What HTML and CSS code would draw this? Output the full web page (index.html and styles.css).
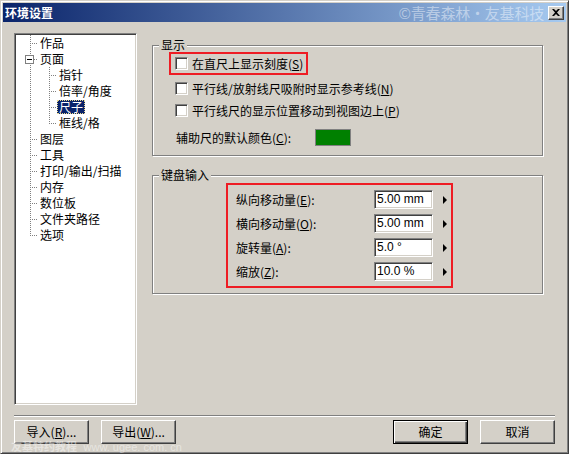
FILE: index.html
```html
<!DOCTYPE html>
<html lang="zh-CN">
<head>
    <meta charset="UTF-8">
    <title>环境设置</title>
    <link rel="stylesheet" href="styles.css">
</head>
<body>
<div class="window">
    <div class="titlebar">
        <span class="title">环境设置</span>
        <span class="mark">©青春森林・友基科技</span>
        <span class="close">
            <svg width="8" height="7" viewBox="0 0 8 7"><path d="M0 0h2l2 2 2-2h2L5 3.5 8 7H6L4 5 2 7H0l3-3.5z" fill="#000"/></svg>
        </span>
    </div>

    <div class="main">
        <div class="tree">
            <div class="row"><span class="conn"></span><span class="node">作品</span></div>
            <div class="row"><span class="conn"><span class="toggle"></span></span><span class="node">页面</span></div>
            <div class="row"><span class="conn pass"></span><span class="conn child"></span><span class="node">指针</span></div>
            <div class="row"><span class="conn pass"></span><span class="conn child"></span><span class="node">倍率/角度</span></div>
            <div class="row"><span class="conn pass"></span><span class="conn child"></span><span class="node selected">尺子</span></div>
            <div class="row"><span class="conn pass"></span><span class="conn child last"></span><span class="node">框线/格</span></div>
            <div class="row"><span class="conn"></span><span class="node">图层</span></div>
            <div class="row"><span class="conn"></span><span class="node">工具</span></div>
            <div class="row"><span class="conn"></span><span class="node">打印/输出/扫描</span></div>
            <div class="row"><span class="conn"></span><span class="node">内存</span></div>
            <div class="row"><span class="conn"></span><span class="node">数位板</span></div>
            <div class="row"><span class="conn"></span><span class="node">文件夹路径</span></div>
            <div class="row"><span class="conn last"></span><span class="node">选项</span></div>
        </div>

        <div class="panel">
            <fieldset class="group display">
                <legend>显示</legend>
                <div class="check-row marked"><span class="check"></span>在直尺上显示刻度(<u>S</u>)</div>
                <div class="check-row"><span class="check"></span>平行线/放射线尺吸附时显示参考线(<u>N</u>)</div>
                <div class="check-row"><span class="check"></span>平行线尺的显示位置移动到视图边上(<u>P</u>)</div>
                <div class="color-row">
                    <span class="color-label">辅助尺的默认颜色(<u>C</u>):</span>
                    <span class="swatch"></span>
                </div>
            </fieldset>

            <fieldset class="group keyboard">
                <legend>键盘输入</legend>
                <div class="kb-box">
                    <div class="kb-row"><span class="kb-label">纵向移动量(<u>E</u>):</span><span class="field">5.00 mm</span><span class="arrow"></span></div>
                    <div class="kb-row"><span class="kb-label">横向移动量(<u>O</u>):</span><span class="field">5.00 mm</span><span class="arrow"></span></div>
                    <div class="kb-row"><span class="kb-label">旋转量(<u>A</u>):</span><span class="field">5.0 °</span><span class="arrow"></span></div>
                    <div class="kb-row"><span class="kb-label">缩放(<u>Z</u>):</span><span class="field">10.0 %</span><span class="arrow"></span></div>
                </div>
            </fieldset>
        </div>
    </div>

    <div class="sep"></div>

    <div class="actions">
        <button class="btn">导入(<u>R</u>)...</button>
        <button class="btn">导出(<u>W</u>)...</button>
        <button class="btn default push">确定</button>
        <button class="btn">取消</button>
    </div>

    <div class="footmark">友基特约教程 <span>www. ugee. com. cn</span></div>
</div>
</body>
</html>
```

FILE: styles.css
```css
body {
    margin: 0;
    padding: 0;
    background-color: #d4d0c8;
    font-family: "Noto Sans CJK SC", "Liberation Sans", sans-serif;
    font-size: 12px;
    color: #000;
}
.window {
    position: relative;
    width: 569px;
    height: 454px;
    box-sizing: border-box;
    padding: 2px;
    border: 1px solid;
    border-color: #d4d0c8 #404040 #404040 #d4d0c8;
    box-shadow: inset 1px 1px #fff, inset -1px -1px #808080;
    background-color: #d4d0c8;
}
.titlebar {
    display: flex;
    align-items: center;
    height: 19px;
    padding: 0 2px;
    background: linear-gradient(to right, #0a246a, #a6caf0);
}
.title {
    color: #fff;
    font-weight: bold;
    font-size: 12px;
}
.mark {
    margin-left: auto;
    color: rgba(255, 255, 255, 0.45);
    font-size: 15px;
    letter-spacing: -0.2px;
}
.close {
    display: flex;
    align-items: center;
    justify-content: center;
    width: 16px;
    height: 14px;
    margin-left: 4px;
    box-sizing: border-box;
    background-color: #d4d0c8;
    border: 1px solid;
    border-color: #fff #404040 #404040 #fff;
    box-shadow: inset -1px -1px #808080;
}

/* left tree */
.main {
    display: flex;
    gap: 15px;
    padding: 11px 11px 0 11px;
}
.tree {
    width: 123px;
    height: 372px;
    box-sizing: border-box;
    background-color: #fff;
    border: 1px solid;
    border-color: #808080 #fff #fff #808080;
    box-shadow: inset 1px 1px #404040, inset -1px -1px #d4d0c8;
    padding: 1px;
}
.row {
    display: flex;
    align-items: center;
    height: 16px;
}
.conn {
    flex: none;
    display: flex;
    align-items: center;
    width: 22px;
    height: 16px;
    background-image:
        repeating-linear-gradient(to bottom, #808080 0 1px, transparent 1px 2px),
        repeating-linear-gradient(to right, #808080 0 1px, transparent 1px 2px);
    background-repeat: no-repeat;
    background-position: 14px 0, 14px 8px;
    background-size: 1px 16px, 7px 1px;
}
.conn.last {
    background-size: 1px 9px, 7px 1px;
}
.conn.pass {
    background-image: repeating-linear-gradient(to bottom, #808080 0 1px, transparent 1px 2px);
    background-position: 14px 0;
    background-size: 1px 16px;
}
.conn.child {
    width: 19px;
    background-position: 11px 0, 11px 8px;
    background-size: 1px 16px, 8px 1px;
}
.conn.child.last {
    background-size: 1px 9px, 8px 1px;
}
.toggle {
    width: 9px;
    height: 9px;
    margin-left: 9px;
    box-sizing: border-box;
    border: 1px solid #808080;
    background: linear-gradient(#000, #000) center / 5px 1px no-repeat, #fff;
}
.node {
    height: 14px;
    line-height: 14px;
    padding: 0 2px;
    white-space: nowrap;
}
.node.selected {
    background-color: #0a246a;
    color: #fff;
    outline: 1px dotted #e8d890;
    outline-offset: -1px;
}

/* right panel */
.panel {
    width: 391px;
    padding-top: 5px;
}
.group {
    margin: 0;
    padding: 0 0 7px 0;
    min-width: 0;
    border: 1px solid #808080;
    box-shadow: inset 1px 1px #fff, 1px 1px #fff;
}
.group legend {
    margin-left: 6px;
    padding: 0 2px;
    height: 14px;
    line-height: 14px;
    background-color: #d4d0c8;
}
.keyboard {
    margin-top: 12px;
    padding-bottom: 5px;
}
.check-row {
    display: flex;
    align-items: center;
    height: 22px;
    padding-left: 22px;
    white-space: nowrap;
}
.check-row.marked {
    display: inline-flex;
    height: 23px;
    box-sizing: border-box;
    margin: 0 0 2px 16px;
    padding: 0 3px 0 4px;
    border: 2px solid #ee1c24;
}
.check {
    flex: none;
    width: 13px;
    height: 13px;
    margin-right: 4px;
    box-sizing: border-box;
    background-color: #fff;
    border: 1px solid;
    border-color: #808080 #fff #fff #808080;
    box-shadow: inset 1px 1px #404040, inset -1px -1px #d4d0c8;
}
.color-row {
    display: flex;
    align-items: center;
    height: 22px;
    margin-top: 5px;
    padding-left: 23px;
}
.color-label {
    width: 139px;
}
.swatch {
    width: 36px;
    height: 17px;
    box-sizing: border-box;
    background-color: #008000;
    border: 1px solid #808080;
}
.kb-box {
    width: 227px;
    box-sizing: border-box;
    margin: 1px 0 0 73px;
    padding: 5px 0 5px 8px;
    border: 2px solid #ee1c24;
}
.kb-row {
    display: flex;
    align-items: center;
    height: 19px;
}
.kb-row + .kb-row {
    margin-top: 5px;
}
.kb-label {
    width: 138px;
}
.field {
    width: 59px;
    height: 19px;
    box-sizing: border-box;
    padding-left: 2px;
    background-color: #fff;
    border: 1px solid;
    border-color: #808080 #fff #fff #808080;
    box-shadow: inset 1px 1px #404040, inset -1px -1px #d4d0c8;
    font-family: "Liberation Sans", sans-serif;
    font-size: 12px;
    line-height: 17px;
}
.arrow {
    margin-left: 10px;
    width: 0;
    height: 0;
    border-left: 4px solid #000;
    border-top: 4px solid transparent;
    border-bottom: 4px solid transparent;
}

/* bottom */
.sep {
    margin: 10px 11px 0 11px;
    border-top: 1px solid #808080;
    border-bottom: 1px solid #fff;
}
.actions {
    display: flex;
    gap: 12px;
    padding: 3px 11px 0 11px;
}
.btn {
    width: 75px;
    height: 24px;
    box-sizing: border-box;
    padding: 0;
    font-family: "Noto Sans CJK SC", "Liberation Sans", sans-serif;
    font-size: 12px;
    line-height: 14px;
    color: #000;
    background-color: #d4d0c8;
    border: 1px solid;
    border-color: #fff #404040 #404040 #fff;
    box-shadow: inset -1px -1px #808080, inset 1px 1px #d4d0c8;
}
.btn.default {
    border: 1px solid #000;
    box-shadow: inset 1px 1px #fff, inset -1px -1px #404040, inset -2px -2px #808080;
}
.push {
    margin-left: auto;
}
.footmark {
    position: absolute;
    left: 10px;
    bottom: 1px;
    height: 11px;
    line-height: 11px;
    color: rgba(255, 255, 255, 0.45);
    font-size: 11px;
    font-weight: bold;
    white-space: nowrap;
}
.footmark span {
    font-family: "Liberation Sans", sans-serif;
    font-weight: normal;
    font-size: 11px;
    margin-left: 4px;
}
```
